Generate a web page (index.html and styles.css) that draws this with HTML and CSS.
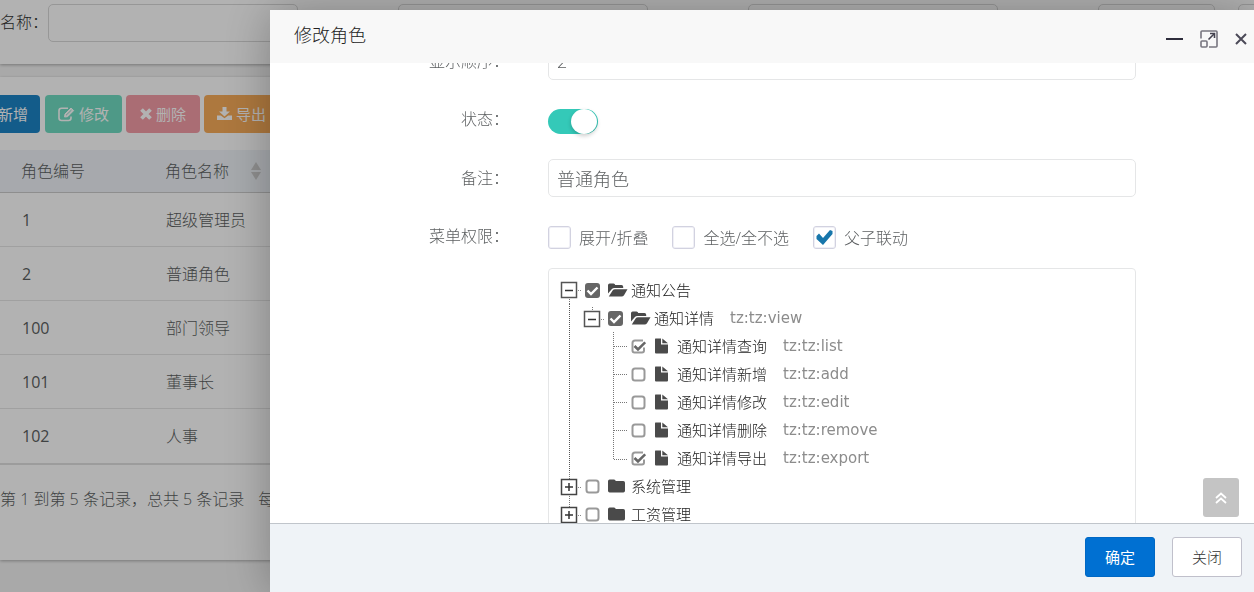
FILE: index.html
```html
<!DOCTYPE html>
<html lang="zh-CN">
<head>
<meta charset="utf-8">
<title>修改角色</title>
<link rel="stylesheet" href="styles.css">
</head>
<body>
<svg class="sprite" aria-hidden="true">
  <symbol id="t-minus" viewBox="0 0 23 28"><rect x="3.5" y="6.5" width="15" height="15" fill="#fff" stroke="#555" stroke-width="1.5"/><path d="M7 14.5h8" stroke="#333" stroke-width="1.5"/><path d="M20 14.500h3" stroke="#888" stroke-dasharray="1 1"/><path d="M11.500 23v5" stroke="#777" stroke-dasharray="1 1"/></symbol>
  <symbol id="t-minus-sub" viewBox="0 0 23 28"><path d="M11.500 3v4" stroke="#777" stroke-dasharray="1 1"/><rect x="3.500" y="7.500" width="15" height="15" fill="#fff" stroke="#555" stroke-width="1.500"/><path d="M7 15.500h8" stroke="#333" stroke-width="1.500"/><path d="M20 15.500h3" stroke="#888" stroke-dasharray="1 1"/></symbol>
  <symbol id="t-plus" viewBox="0 0 23 28"><path d="M11.500 0v28" stroke="#777" stroke-dasharray="1 1"/><rect x="3.500" y="7.500" width="15" height="15" fill="#fff" stroke="#444" stroke-width="1.500"/><path d="M7 15h8M11 11v8" stroke="#333" stroke-width="1.500"/><path d="M20 15.500h3" stroke="#888" stroke-dasharray="1 1"/></symbol>
  <symbol id="t-line" viewBox="0 0 23 28"><path d="M11.500 0v28" stroke="#555" stroke-dasharray="1 1"/></symbol>
  <symbol id="t-tee" viewBox="0 0 23 28"><path d="M9.500 0v28M10 14.500h13" stroke="#777" stroke-dasharray="1 1"/></symbol>
  <symbol id="t-elbow" viewBox="0 0 23 28"><path d="M9.500 0v15M10 15.500h13" stroke="#777" stroke-dasharray="1 1"/></symbol>
  <symbol id="i-open" viewBox="0 0 20 16"><path d="M0 11.500V3.200Q0 1.500 1.700 1.500H5.500Q7 1.500 7.200 3H13.500Q15.200 3 15.200 4.700V6H6.500Q4.800 6 3.700 7.200Z"/><path d="M.8 14.500L4.600 8.600Q5.400 7.300 7 7.300H19.500L16 13.200Q15.200 14.500 13.600 14.500Z"/></symbol>
  <symbol id="i-folder" viewBox="0 0 20 16"><path d="M1.700 1.500H6Q7.500 1.500 7.700 3H15.300Q17 3 17 4.700V12.800Q17 14.500 15.300 14.500H1.700Q0 14.500 0 12.800V3.200Q0 1.500 1.700 1.500Z"/></symbol>
  <symbol id="i-file" viewBox="0 0 20 16"><path d="M1.500 .500H7V6.500H14V14.500Q14 15.500 13 15.500H2Q1 15.500 1 14.500V1.500Q1 .500 1.500 .500ZM8.300 .500L14 5.300H8.300Z"/></symbol>
</svg>

<main class="page">
  <form class="panel search">
    <label for="q-name">名称：</label>
    <input id="q-name" class="field" type="text">
    <input class="field" type="text" aria-label="权限字符">
    <input class="field" type="text" aria-label="角色状态">
    <input class="field field-date" type="text" aria-label="开始时间">
    <input class="field field-end" type="text" aria-label="结束时间">
  </form>

  <section class="panel list">
    <div class="toolbar">
      <button class="tool add" type="button">新增</button>
      <button class="tool edit" type="button" disabled><svg width="17" height="16" viewBox="0 0 17 16" fill="none" stroke="#fff"><path d="M10 2.200H3.500Q1 2.200 1 4.700V12Q1 14.500 3.500 14.500H10.500Q13 14.500 13 12V10.500" stroke-width="1.600"/><path d="M6.500 11L7 8L13 2L15.700 4.600L9.600 10.700Z" fill="#fff"/><path d="M8 9.300L13.500 4" stroke="#6fcdb8" stroke-width=".8"/></svg>修改</button>
      <button class="tool remove" type="button" disabled><svg width="12" height="14" viewBox="0 0 12 14" stroke="#fff" stroke-width="3.800"><path d="M1.500 2.500L10.500 11.500M10.500 2.500L1.500 11.500"/></svg>删除</button>
      <button class="tool export" type="button"><svg width="15" height="16" viewBox="0 0 15 16" fill="#fff"><path d="M5.500 1H9.500V5.500H13L7.500 10.500L2 5.500H5.500Z"/><path d="M0 9.500H3.800L7.500 12.300L11.200 9.500H15V14H0Z"/></svg>导出</button>
    </div>
    <table class="roles">
      <thead><tr><th class="id">角色编号</th><th><span class="sort">角色名称<svg width="10" height="20" viewBox="0 0 10 20" fill="#ccc"><path d="M5 1L10 9H0ZM0 11H10L5 19Z"/></svg></span></th></tr></thead>
      <tbody>
        <tr><td>1</td><td>超级管理员</td></tr>
        <tr><td>2</td><td>普通角色</td></tr>
        <tr><td>100</td><td>部门领导</td></tr>
        <tr><td>101</td><td>董事长</td></tr>
        <tr><td>102</td><td>人事</td></tr>
      </tbody>
    </table>
    <p class="summary"><span>第 1 到第 5 条记录，总共 5 条记录</span><span>每</span></p>
  </section>
</main>

<div class="shade"></div>

<div class="dialog" role="dialog" aria-labelledby="dlg-title">
  <header class="dialog-head">
    <h1 id="dlg-title">修改角色</h1>
    <div class="window-tools">
      <button type="button" aria-label="最小化"><svg width="17" height="18" viewBox="0 0 17 18"><path d="M0 9h17" stroke="#2e2d3c" stroke-width="2"/></svg></button>
      <button type="button" aria-label="最大化"><svg width="18" height="18" viewBox="0 0 18 18" fill="none" stroke="#77757f" stroke-width="1.600"><path d="M1 8.500V2Q1 1 2 1H16Q17 1 17 2V16Q17 17 16 17H9"/><rect x="1" y="11" width="6" height="6" rx="1"/><path d="M8.500 9.500L14 4" stroke="#44424f"/><path d="M10 3.500H14.500V8" stroke="#44424f"/></svg></button>
      <button type="button" aria-label="关闭窗口"><svg width="12" height="18" viewBox="0 0 12 18"><path d="M1 4L11 14M11 4L1 14" stroke="#4c4a58" stroke-width="2"/></svg></button>
    </div>
  </header>

  <div class="dialog-body">
    <form class="form" id="role-form">
      <div class="row">
        <label class="name" for="order">显示顺序：</label>
        <div class="control"><input id="order" class="field" type="text" value="2"></div>
      </div>
      <div class="row">
        <label class="name" for="state">状态：</label>
        <div class="control"><input id="state" class="toggle" type="checkbox" checked></div>
      </div>
      <div class="row">
        <label class="name" for="remark">备注：</label>
        <div class="control"><input id="remark" class="field" type="text" value="普通角色"></div>
      </div>
      <div class="row">
        <span class="name">菜单权限：</span>
        <div class="control">
          <div class="options">
            <label><input type="checkbox">展开/折叠</label>
            <label><input type="checkbox">全选/全不选</label>
            <label><input type="checkbox" checked>父子联动</label>
          </div>
          <ul class="tree">
            <li><svg class="cell"><use href="#t-minus"/></svg><label><input type="checkbox" class="full" checked><svg class="kind"><use href="#i-open"/></svg>通知公告</label></li>
            <li><svg class="cell"><use href="#t-line"/></svg><svg class="cell"><use href="#t-minus-sub"/></svg><label><input type="checkbox" class="full" checked><svg class="kind"><use href="#i-open"/></svg>通知详情<span class="perm">tz:tz:view</span></label></li>
            <li><svg class="cell"><use href="#t-line"/></svg><span class="cell"></span><svg class="cell"><use href="#t-tee"/></svg><label><input type="checkbox" checked><svg class="kind"><use href="#i-file"/></svg>通知详情查询<span class="perm">tz:tz:list</span></label></li>
            <li><svg class="cell"><use href="#t-line"/></svg><span class="cell"></span><svg class="cell"><use href="#t-tee"/></svg><label><input type="checkbox"><svg class="kind"><use href="#i-file"/></svg>通知详情新增<span class="perm">tz:tz:add</span></label></li>
            <li><svg class="cell"><use href="#t-line"/></svg><span class="cell"></span><svg class="cell"><use href="#t-tee"/></svg><label><input type="checkbox"><svg class="kind"><use href="#i-file"/></svg>通知详情修改<span class="perm">tz:tz:edit</span></label></li>
            <li><svg class="cell"><use href="#t-line"/></svg><span class="cell"></span><svg class="cell"><use href="#t-tee"/></svg><label><input type="checkbox"><svg class="kind"><use href="#i-file"/></svg>通知详情删除<span class="perm">tz:tz:remove</span></label></li>
            <li><svg class="cell"><use href="#t-line"/></svg><span class="cell"></span><svg class="cell"><use href="#t-elbow"/></svg><label><input type="checkbox" checked><svg class="kind"><use href="#i-file"/></svg>通知详情导出<span class="perm">tz:tz:export</span></label></li>
            <li><svg class="cell"><use href="#t-plus"/></svg><label><input type="checkbox"><svg class="kind"><use href="#i-folder"/></svg>系统管理</label></li>
            <li><svg class="cell"><use href="#t-plus"/></svg><label><input type="checkbox"><svg class="kind"><use href="#i-folder"/></svg>工资管理</label></li>
          </ul>
        </div>
      </div>
    </form>
    <button class="to-top" type="button" aria-label="返回顶部"><svg width="12" height="12" viewBox="0 0 12 12" fill="none" stroke="#fff" stroke-width="1.800"><path d="M1 6L6 1.500L11 6M1 11L6 6.500L11 11"/></svg></button>
  </div>

  <footer class="dialog-foot">
    <button class="btn primary" type="submit" form="role-form">确定</button>
    <button class="btn" type="button">关闭</button>
  </footer>
</div>
</body>
</html>
```
FILE: styles.css
```css
* { box-sizing: border-box; }

body {
  margin: 0;
  height: 100vh;
  overflow: hidden;
  background: #f3f3f3;
  color: #5c5f61;
  font: 300 16px/20px "Open Sans", "Noto Sans CJK SC", sans-serif;
}

button, input { font: inherit; color: inherit; margin: 0; }
button { cursor: pointer; }
.sprite { display: none; }

/* page behind the dialog */
.page { display: flex; flex-direction: column; gap: 13px; }

.panel {
  background: #fff;
  box-shadow: 0 1px 3px rgba(0, 0, 0, .3);
}

.search {
  display: flex;
  gap: 100px;
  padding: 4px 0 22px;
  overflow: hidden;
}
.search label { width: 48px; margin-right: -100px; padding-top: 8px; flex: none; color: #333; white-space: nowrap; }

.field {
  width: 100%;
  height: 38px;
  padding: 0 8px;
  border: 1px solid #e5e6e7;
  border-radius: 5px;
  background: #fff;
  font-size: 18px;
}
.search .field { width: 250px; flex: none; border-color: #d8d8d8; }
.search .field-date { width: 117px; }
.search .field-end { width: 117px; margin-left: -77px; }

.list { padding: 18px 0 51px; }
.toolbar { display: flex; gap: 4px; margin-bottom: 17px; }
.tool {
  display: flex;
  align-items: center;
  gap: 4px;
  height: 38px;
  padding: 0 13px;
  border: 0;
  border-radius: 4px;
  color: #fff;
  font-weight: 400;
  font-size: 15px;
  white-space: nowrap;
}
.add { width: 40px; padding: 0 12px 0 0; justify-content: flex-end; background: #1c84c6; border-radius: 0 4px 4px 0; margin-right: 1px; }
.edit { background: #70dcc2; }
.remove { padding: 0 14px; background: #f49ca7; }
.export { background: #f8ac59; }

.roles { width: 100%; border-collapse: separate; border-spacing: 0; table-layout: fixed; border-bottom: 2px solid #e0e0e0; }
.roles th, .roles td { padding: 0 0 0 22px; text-align: left; font-weight: 300; }
.roles th { height: 43px; padding-left: 21px; background: #eff3f8; border-bottom: 1px solid #ccc; }
.roles .id { width: 144px; }
.roles td { height: 54px; border-bottom: 1px solid #e5e5e5; }
.roles td:first-child { font-weight: 400; }
.roles tr:last-child td { border-bottom: 0; }
.sort { display: inline-flex; align-items: center; gap: 22px; }

.summary { display: flex; gap: 14px; margin: 24px 0 0; white-space: nowrap; }

.shade { position: fixed; inset: 0; background: rgba(0, 0, 0, .3); }

/* dialog */
.dialog {
  position: fixed;
  inset: 10px 0 0 270px;
  display: flex;
  flex-direction: column;
  background: #fff;
  border-radius: 2px;
  box-shadow: 1px 1px 50px rgba(0, 0, 0, .3);
}

.dialog-head {
  display: flex;
  justify-content: space-between;
  height: 53px;
  padding: 0 7px 0 24px;
  background: #f8f8f8;
}
.dialog-head h1 { margin: 0; font-size: 18px; font-weight: 300; line-height: 51px; color: #222; }
.window-tools { display: flex; align-items: center; gap: 17px; padding-top: 5px; }
.window-tools button { display: flex; padding: 0; border: 0; background: none; }

.dialog-body { position: relative; flex: 1; min-height: 0; overflow: hidden; }
.form { display: flex; flex-direction: column; gap: 20px; margin-top: -21px; padding: 0 22px 0 26px; }
.row { display: grid; grid-template-columns: 3fr 8fr 1fr; min-height: 38px; }
.name { padding: 9px 21px 0; text-align: right; white-space: nowrap; }
.control { padding: 0 18px; display: flex; flex-direction: column; }

.toggle {
  appearance: none;
  display: flex;
  justify-content: flex-end;
  width: 50px;
  height: 25px;
  margin: 9px 0 5px;
  padding-right: 1px;
  border-radius: 13px;
  background: #34c9b8;
}
.toggle::before { content: ""; width: 26px; height: 25px; border-radius: 50%; background: #fff; box-shadow: 0 2px 4px rgba(0, 0, 0, .2); }

.options { display: flex; gap: 24px; padding: 9px 0 19px; }
.options label { display: flex; align-items: center; gap: 8px; white-space: nowrap; }
.options input {
  appearance: none;
  width: 23px;
  height: 23px;
  border: 1px solid #d2d2e0;
  border-radius: 3px;
  box-shadow: inset 0 0 0 1px #f0f0f6;
}
.options input:checked {
  background: url("data:image/svg+xml,%3Csvg xmlns='http://www.w3.org/2000/svg' viewBox='0 0 21 21'%3E%3Cpath d='M2.500 9L5 6.500L9 11L16 3L18.500 4V7L9 18L2.500 12Z' fill='%231776ab'/%3E%3C/svg%3E") center / 21px 21px no-repeat;
}

.tree {
  min-height: 300px;
  margin: 0;
  padding: 7px 9px;
  border: 1px solid #e5e6e7;
  border-radius: 4px;
  list-style: none;
  font-size: 15px;
  color: #222;
}
.tree li { display: flex; height: 28px; }
.cell { width: 23px; height: 28px; flex: none; }
.tree label { display: flex; align-items: center; white-space: nowrap; }
.tree input {
  appearance: none;
  width: 15px;
  height: 15px;
  margin: 1px 8px 0 4px;
  background: url("data:image/svg+xml,%3Csvg xmlns='http://www.w3.org/2000/svg' viewBox='0 0 15 15'%3E%3Crect x='1.500' y='1.500' width='12' height='12' rx='2.500' fill='%23fff' stroke='%23999' stroke-width='2'/%3E%3C/svg%3E") center / 15px 15px no-repeat;
}
.tree input:checked {
  background-image: url("data:image/svg+xml,%3Csvg xmlns='http://www.w3.org/2000/svg' viewBox='0 0 15 15'%3E%3Cpath d='M13 8.500V11.500Q13 13.500 11 13.500H3.500Q1.500 13.500 1.500 11.500V4Q1.500 1.500 4 1.500H12' fill='none' stroke='%23999' stroke-width='2'/%3E%3Cpath d='M3.500 7L7 10.500L14.200 3.300' fill='none' stroke='%23666' stroke-width='2.600'/%3E%3C/svg%3E");
}
.tree .full:checked {
  background-image: url("data:image/svg+xml,%3Csvg xmlns='http://www.w3.org/2000/svg' viewBox='0 0 15 15'%3E%3Crect width='15' height='15' rx='3' fill='%23666'/%3E%3Cpath d='M2.500 7.500L6 11L12.500 4.500' fill='none' stroke='%23fff' stroke-width='2.400'/%3E%3C/svg%3E");
}
.kind { width: 20px; height: 16px; margin-right: 3px; fill: #4a4a4a; }
.perm { margin-left: 16px; font-family: "DejaVu Sans", sans-serif; font-weight: 400; color: #8c8c8c; }

.to-top {
  position: absolute;
  right: 15px;
  bottom: 6px;
  display: grid;
  place-items: center;
  width: 36px;
  height: 39px;
  padding: 0;
  border: 0;
  border-radius: 3px;
  background: #c4c4c4;
}

.dialog-foot {
  display: flex;
  justify-content: flex-end;
  gap: 17px;
  padding: 13px 12px 15px;
  border-top: 1px solid #c0c5cb;
  background: #eff3f7;
}
.btn {
  width: 70px;
  height: 40px;
  padding: 0;
  border: 1px solid #c0c0cb;
  border-radius: 3px;
  background: #fff;
  color: #333;
  font-size: 15px;
}
.primary { border-color: #0068c4; background: #0070d2; color: #fff; font-weight: 400; }
```
